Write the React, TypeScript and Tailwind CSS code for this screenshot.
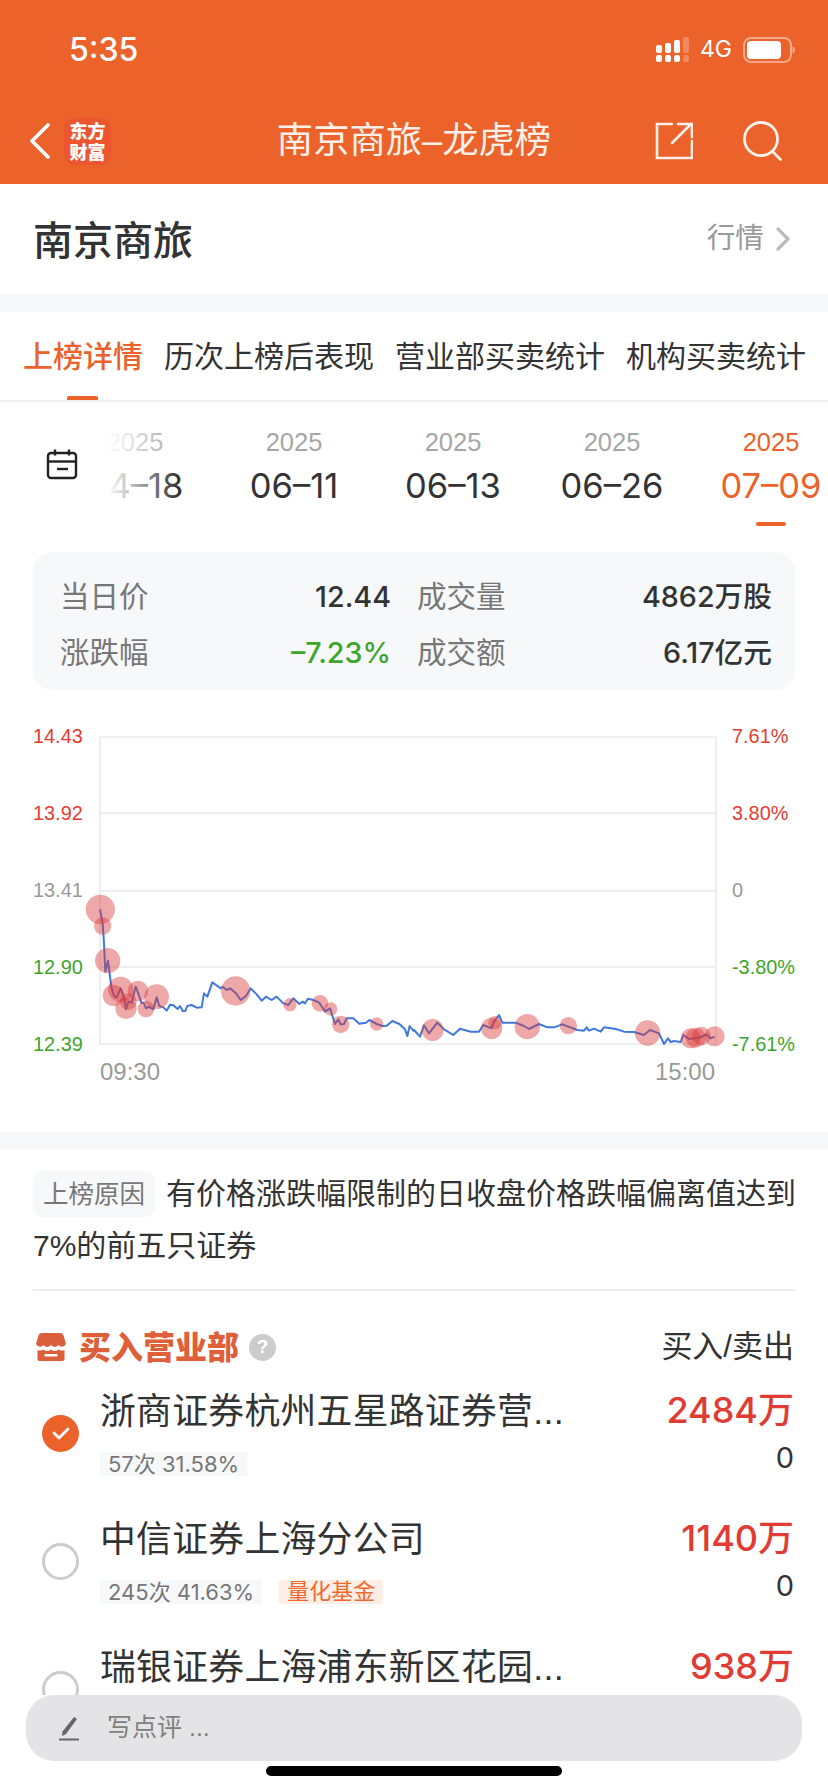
const numFont = "font-['Inter','Noto_Sans_CJK_SC',sans-serif]"

const leftLine = [
  [300, 598], [308, 640], [312, 700], [316, 785], [324, 752], [330, 800], [335, 835], [342, 858], [350, 862], [362, 835],
  [372, 860], [378, 897], [385, 875], [395, 878], [407, 830], [415, 850], [424, 878], [432, 880], [438, 895], [446, 890],
  [460, 898], [470, 862], [478, 888], [490, 892], [500, 902], [510, 884], [520, 886], [533, 897], [540, 888], [548, 903],
  [556, 903], [562, 888], [575, 885], [590, 893], [605, 892], [612, 850], [622, 860], [637, 817], [648, 825], [662, 835],
  [668, 830], [680, 840], [690, 835], [708, 850], [722, 870], [738, 858], [752, 835], [770, 853], [785, 872], [798, 860],
  [815, 870], [830, 860], [850, 880], [865, 885], [880, 865], [898, 882], [908, 875], [915, 880], [924, 866], [940, 870],
  [958, 878], [975, 905], [990, 895], [1005, 942], [1015, 928], [1022, 943], [1032, 942], [1040, 925], [1060, 925], [1078, 941],
  [1098, 938], [1108, 930], [1130, 942], [1148, 948], [1160, 947], [1177, 933], [1198, 942], [1215, 958], [1222, 978], [1229, 948],
  [1240, 962],
]

const rightLine = [
  [0, 960], [18, 980], [30, 946], [45, 970], [70, 938], [90, 958], [118, 975], [138, 956], [170, 965], [195, 965],
  [208, 945], [232, 955], [240, 935], [255, 915], [265, 938], [305, 938], [330, 948], [345, 957], [375, 942], [400, 952],
  [420, 952], [445, 943], [490, 960], [510, 962], [518, 952], [525, 962], [540, 956], [560, 965], [570, 952], [605, 957],
  [630, 965], [660, 966], [690, 975], [708, 960], [735, 970], [750, 1002], [762, 985], [770, 996], [780, 993], [800, 996],
  [808, 975], [825, 987], [860, 982], [875, 973], [890, 985], [902, 980],
]

const leftDots = [
  [301, 598, 44], [308, 648, 26], [323, 752, 38], [340, 856, 32], [362, 838, 38], [385, 875, 25], [378, 895, 32], [414, 843, 31],
  [438, 897, 25], [470, 860, 37], [707, 843, 44], [870, 884, 20], [960, 880, 25], [992, 897, 20], [1022, 943, 26], [1130, 942, 20],
]

const rightDots = [
  [56, 960, 33], [233, 955, 32], [243, 938, 20], [340, 950, 38], [463, 947, 26], [701, 969, 38],
  [830, 985, 30], [845, 983, 30], [862, 978, 28], [902, 979, 30],
]

// the chart was read off 3x crops, so bring both halves back to page coordinates
const linePoints = [
  ...leftLine.map(([x, y]) => `${x / 3},${710 + y / 3}`),
  ...rightLine.map(([x, y]) => `${414 + x / 3},${710 + y / 3}`),
].join(" ")

const dots = [
  ...leftDots.map(([x, y, r]) => [x / 3, 710 + y / 3, r / 3]),
  ...rightDots.map(([x, y, r]) => [414 + x / 3, 710 + y / 3, r / 3]),
]

const dates = ["04–18", "06–11", "06–13", "06–26", "07–09"]

const tabs = ["上榜详情", "历次上榜后表现", "营业部买卖统计", "机构买卖统计"]

const leftAxis = [
  { label: "14.43", color: "text-[#e23c33]" },
  { label: "13.92", color: "text-[#e23c33]" },
  { label: "13.41", color: "text-[#999999]" },
  { label: "12.90", color: "text-[#3da52c]" },
  { label: "12.39", color: "text-[#3da52c]" },
]

const rightAxis = [
  { label: "7.61%", color: "text-[#e23c33]" },
  { label: "3.80%", color: "text-[#e23c33]" },
  { label: "0", color: "text-[#999999]" },
  { label: "-3.80%", color: "text-[#3da52c]" },
  { label: "-7.61%", color: "text-[#3da52c]" },
]

const branches: { name: string; stat?: string; tag?: string; amount: string; sell?: string; checked?: boolean }[] = [
  { name: "浙商证券杭州五星路证券营...", stat: "57次 31.58%", amount: "2484万", sell: "0", checked: true },
  { name: "中信证券上海分公司", stat: "245次 41.63%", tag: "量化基金", amount: "1140万", sell: "0" },
  { name: "瑞银证券上海浦东新区花园...", amount: "938万" },
]

function StatusBar() {
  return (
    <div className="flex h-[98px] items-center justify-between pt-[1px] pr-[33px] pl-[69px] text-white">
      <span className="font-['Inter',sans-serif] text-[32px] font-medium">5:35</span>
      <div className="flex items-center">
        <svg width="33" height="27" viewBox="0 0 33 27" fill="white">
          <rect x="0" y="9" width="6" height="8" rx="2" />
          <rect x="0" y="19" width="6" height="7" rx="2" />
          <rect x="9" y="7" width="6" height="10" rx="2" />
          <rect x="9" y="19" width="6" height="7" rx="2" />
          <rect x="18" y="4" width="6" height="13" rx="2" />
          <rect x="18" y="19" width="6" height="7" rx="2" />
          <rect x="27" y="1" width="6" height="16" rx="2" opacity="0.25" />
          <rect x="27" y="19" width="6" height="7" rx="2" opacity="0.25" />
        </svg>
        <span className="ml-[11px] font-['Inter',sans-serif] text-[23px]">4G</span>
        <svg className="ml-[11px]" width="52" height="26" viewBox="0 0 52 26" fill="none">
          <rect x="1" y="1" width="47" height="24" rx="7" stroke="white" strokeOpacity="0.45" strokeWidth="2" />
          <rect x="4" y="4" width="34" height="18" rx="4" fill="white" />
          <path d="M49.5 9.5c2 .6 2.5 2 2.5 3.5s-.5 3-2.5 3.5z" fill="white" fillOpacity="0.45" />
        </svg>
      </div>
    </div>
  )
}

function NavBar() {
  return (
    <div className="grid h-[86px] grid-cols-[1fr_auto_1fr] items-center">
      <div className="flex items-center pl-[29px]">
        <svg width="21" height="36" viewBox="0 0 21 36" fill="none">
          <path d="M19 2 3 18l16 16" stroke="white" strokeWidth="3.6" strokeLinecap="round" strokeLinejoin="round" />
        </svg>
        <div className="ml-[14px] flex h-[47px] w-[47px] flex-col items-center justify-center rounded-[11px] bg-[#ec5530] font-['Noto_Sans_CJK_SC',sans-serif] text-[18px] leading-[21px] font-black text-white">
          <span>东方</span>
          <span>财富</span>
        </div>
      </div>
      <div className="text-[36.300px] leading-[44px] text-[#fdf0e9]">南京商旅–龙虎榜</div>
      <div className="flex items-center justify-end pr-[45px]">
        <svg width="38" height="38" viewBox="0 0 38 38" fill="none" stroke="#fdf0e9" strokeWidth="2.6" strokeLinecap="round">
          <path d="M17 2H2v34h35V19" />
          <path d="M17 21 36 2" />
          <path d="M23 2h14v13" />
        </svg>
        <svg className="ml-[50px]" width="40" height="40" viewBox="0 0 40 40" fill="none" stroke="#fdf0e9" strokeWidth="2.8" strokeLinecap="round">
          <circle cx="18" cy="18" r="16.5" />
          <path d="m30 31 7.500 7.500" />
        </svg>
      </div>
    </div>
  )
}

function DateStrip() {
  return (
    <div className="flex h-[150px]">
      <div className="w-[108px] shrink-0 pt-[46px] pl-[46px]">
        <svg width="32" height="32" viewBox="0 0 32 32" fill="none" stroke="#222222" strokeWidth="2.400">
          <rect x="2" y="5" width="28" height="25" rx="3" />
          <path d="M2 13.500h28" />
          <path d="M9 1.500v6M23 1.500v6" />
          <path d="M11 21h11" />
        </svg>
      </div>
      <div className="relative flex-1 overflow-hidden">
        <div className="-ml-[52.500px] flex">
          {dates.map((date, index) => {
            const active = index === dates.length - 1
            return (
              <div key={date} className="flex w-[159px] shrink-0 flex-col items-center pt-[25px]">
                <span className={`text-[25.500px] leading-[30px] ${active ? "text-[#eb622b]" : "text-[#a6a6a6]"}`}>2025</span>
                <span className={`mt-[9px] ${numFont} text-[34.500px] leading-[40px] ${active ? "text-[#eb622b]" : "text-[#333333]"}`}>{date}</span>
                {active && <span className="mt-[16px] h-[4px] w-[30px] rounded-full bg-[#eb622b]" />}
              </div>
            )
          })}
        </div>
        {/* fades the first date out under the calendar */}
        <div className="absolute inset-y-0 left-0 w-[70px] bg-gradient-to-r from-white to-transparent" />
      </div>
    </div>
  )
}

function Quote() {
  return (
    <div className="mx-[33px] grid h-[138px] auto-rows-[56px] grid-cols-[331px_355px] gap-x-[26px] rounded-[20px] bg-[#f7f8fa] pt-[17px] pl-[27px] text-[29.500px] leading-[56px]">
      <div className="flex justify-between">
        <span className="text-[#777777]">当日价</span>
        <span className={`${numFont} text-[28.700px] font-medium text-[#333333]`}>12.44</span>
      </div>
      <div className="flex justify-between">
        <span className="text-[#777777]">成交量</span>
        <span className={`${numFont} text-[28.700px] font-medium text-[#333333]`}>4862万股</span>
      </div>
      <div className="flex justify-between">
        <span className="text-[#777777]">涨跌幅</span>
        <span className={`${numFont} text-[28.700px] font-medium text-[#3da52c]`}>–7.23%</span>
      </div>
      <div className="flex justify-between">
        <span className="text-[#777777]">成交额</span>
        <span className={`${numFont} text-[28.700px] font-medium text-[#333333]`}>6.17亿元</span>
      </div>
    </div>
  )
}

function Chart() {
  return (
    <div className="pt-[36px] pb-[48px]">
      <div className="flex h-[328px] pl-[33px] text-[19.900px] leading-[20px]">
        <div className="flex w-[66px] flex-col justify-between">
          {leftAxis.map((item) => (
            <span key={item.label} className={item.color}>{item.label}</span>
          ))}
        </div>
        <svg className="overflow-visible" width="618" height="328" viewBox="99 726 618 328" fill="none">
          {[737, 813, 891, 967, 1044].map((y) => (
            <path key={y} d={`M100 ${y}H716`} stroke="#eeeeee" strokeWidth="2" />
          ))}
          <path d="M100 736V1045M716 736V1045" stroke="#eeeeee" strokeWidth="2" />
          <polyline points={linePoints} stroke="#3f78dc" strokeWidth="2" strokeLinejoin="round" />
          {dots.map(([cx, cy, r], index) => (
            <circle key={index} cx={cx} cy={cy} r={r} fill="#d93a3a" fillOpacity="0.44" />
          ))}
        </svg>
        <div className="ml-[15px] flex flex-col justify-between">
          {rightAxis.map((item) => (
            <span key={item.label} className={item.color}>{item.label}</span>
          ))}
        </div>
      </div>
      <div className="mt-[6px] flex justify-between pr-[113px] pl-[100px] text-[24px] leading-[24px] text-[#999999]">
        <span>09:30</span>
        <span>15:00</span>
      </div>
    </div>
  )
}

function StoreIcon() {
  return (
    <svg width="30" height="28" viewBox="0 0 30 28" fill="#da5f3b">
      <path d="M6 0h18c2 0 3 1 3.500 2.500L30 11c-2.500 3.500-5 3.500-7.500 1-2.500 2.500-5 2.500-7.500 0-2.500 2.500-5 2.500-7.500 0C5 14.500 2.500 14.500 0 11l2.500-8.500C3 1 4 0 6 0z" />
      <path d="M1.500 17c2.300 1 4.300.700 6-.5 2.500 2 5 2 7.500 0 2.500 2 5 2 7.500 0 1.700 1.200 3.700 1.500 6 .5V26c0 1.200-.8 2-2 2H3.500c-1.200 0-2-.8-2-2z" />
      <rect x="8.500" y="21" width="13" height="2.500" fill="white" />
    </svg>
  )
}

function Radio({ checked }: { checked?: boolean }) {
  if (checked) {
    return (
      <span className="flex h-[37px] w-[37px] shrink-0 items-center justify-center rounded-full bg-[#eb622b]">
        <svg width="18" height="14" viewBox="0 0 18 14" fill="none">
          <path d="m2 7 5 5 9-9" stroke="white" strokeWidth="2.800" strokeLinecap="round" strokeLinejoin="round" />
        </svg>
      </span>
    )
  }
  return <span className="h-[37px] w-[37px] shrink-0 rounded-full border-[3px] border-[#cccccc]" />
}

function Branches() {
  return (
    <div>
      {branches.map((item) => (
        <div key={item.name} className="mb-[42px] flex items-center pr-[1px] pl-[9px]">
          <Radio checked={item.checked} />
          <div className="ml-[21px] min-w-0 flex-1">
            <div className="text-[35.800px] leading-[44px] tracking-[0.3px] whitespace-nowrap text-[#333333]">{item.name}</div>
            <div className="mt-[18px] flex h-[24px] text-[22px] leading-[24px]">
              {item.stat && <span className={`${numFont} bg-[#f7f8fa] px-[8px] text-[#777777]`}>{item.stat}</span>}
              {item.tag && <span className="ml-[17px] bg-[#fdeee6] px-[8px] text-[#f06a30]">{item.tag}</span>}
            </div>
          </div>
          <div className="flex shrink-0 flex-col items-end self-start">
            <span className={`${numFont} text-[36px] leading-[40px] font-medium text-[#e03c34]`}>{item.amount}</span>
            {item.sell && <span className={`${numFont} mt-[10px] text-[29px] leading-[36px] text-[#333333]`}>{item.sell}</span>}
          </div>
        </div>
      ))}
    </div>
  )
}

export default function App() {
  return (
    <div className="relative h-[1792px] w-[828px] overflow-hidden bg-white font-['Liberation_Sans','Noto_Sans_CJK_SC',sans-serif]">
      <header className="h-[184px] bg-[#eb622b]">
        <StatusBar />
        <NavBar />
      </header>

      <div className="flex h-[110px] items-center justify-between pr-[37px] pl-[33px]">
        <h1 className="pt-[3px] text-[40px] font-medium text-[#333333]">南京商旅</h1>
        <div className="flex items-center">
          <span className="text-[28.700px] text-[#999999]">行情</span>
          <svg className="ml-[12px]" width="15" height="24" viewBox="0 0 15 24" fill="none">
            <path d="m2 2 10 10L2 22" stroke="#bbbbbb" strokeWidth="3.200" strokeLinecap="round" strokeLinejoin="round" />
          </svg>
        </div>
      </div>

      <div className="h-[18px] bg-[#f7f8fa]" />

      <nav className="flex h-[90px] justify-between border-b-2 border-[#eeeeee] pr-[22px] pl-[23px] text-[30px] leading-[44px]">
        {tabs.map((tab, index) => (
          <div key={tab} className={`relative pt-[23px] ${index === 0 ? "font-medium text-[#eb622b]" : "text-[#333333]"}`}>
            {tab}
            {index === 0 && <span className="absolute bottom-0 left-[44px] h-[4px] w-[31px] rounded-t-[2px] bg-[#eb622b]" />}
          </div>
        ))}
      </nav>

      <DateStrip />
      <Quote />
      <Chart />

      <div className="h-[17px] bg-[#f7f8fa]" />

      <section className="px-[33px]">
        <div className="border-b-2 border-[#eeeeee] pt-[19px] pb-[17px] text-[30px] leading-[52px] whitespace-nowrap text-[#333333]">
          <span className="mr-[11px] inline-block h-[46px] rounded-[10px] bg-[#f7f8fa] px-[10px] align-[1px] text-[25.500px] leading-[46px] text-[#777777]">上榜原因</span>
          有价格涨跌幅限制的日收盘价格跌幅偏离值达到
          <br />
          7%的前五只证券
        </div>

        <div className="mt-[28px] flex h-[56px] items-center justify-between pr-[1px]">
          <div className="flex items-center pl-[3px]">
            <StoreIcon />
            <span className="ml-[13px] -translate-y-[2px] font-['Noto_Sans_CJK_SC',sans-serif] text-[32px] font-black text-[#de5f39]">买入营业部</span>
            <span className="ml-[10px] flex h-[27px] w-[27px] items-center justify-center rounded-full bg-[#cccccc] text-[19px] font-bold text-white">?</span>
          </div>
          <span className="text-[31px] text-[#333333]">买入/卖出</span>
        </div>

        <div className="pt-[15px]">
          <Branches />
        </div>
      </section>

      {/* comment box stays pinned over the list */}
      <div className="absolute inset-x-0 bottom-0 h-[97px] bg-white">
        <div className="mx-[26px] flex h-[66px] w-[776px] items-center rounded-[28px] bg-[#e4e4e6] pl-[33px]">
          <svg width="20" height="25" viewBox="0 0 20 25" fill="none">
            <path d="M15 1 18 3 7 18l-4 2 .5-4.500z" fill="#666666" />
            <path d="M0 23.500h20" stroke="#666666" strokeWidth="2" />
          </svg>
          <span className="ml-[28px] text-[25px] text-[#808080]">写点评 ...</span>
        </div>
        <div className="mx-auto mt-[5px] h-[10px] w-[296px] rounded-full bg-black" />
      </div>
    </div>
  )
}
